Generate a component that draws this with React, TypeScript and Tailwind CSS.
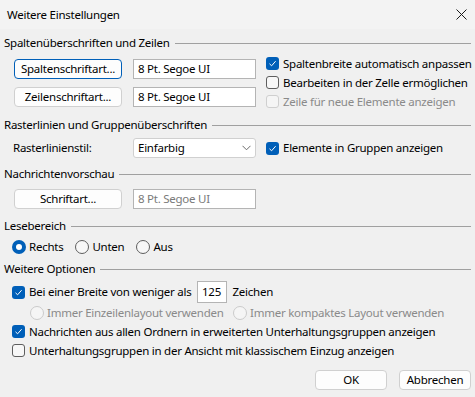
import React from 'react';

const Check = ({ checked = false, disabled = false }: { checked?: boolean; disabled?: boolean }) => {
  if (checked) {
    return (
      <span className="w-[13px] h-[13px] rounded-[3px] bg-[#005fb8] flex items-center justify-center shrink-0">
        <svg width="9" height="9" viewBox="0 0 9 9">
          <path d="M1.5 4.8 L3.6 6.8 L7.6 2.2" fill="none" stroke="#fff" strokeWidth="1" />
        </svg>
      </span>
    );
  }
  return (
    <span
      className={
        disabled
          ? 'w-[13px] h-[13px] rounded-[3px] border border-[#cfcfcf] bg-[#f5f5f5] shrink-0'
          : 'w-[13px] h-[13px] rounded-[3px] border border-[#5e5e5e] bg-[#f7f7f7] shrink-0'
      }
    />
  );
};

const Radio = ({ checked = false, disabled = false }: { checked?: boolean; disabled?: boolean }) => {
  if (checked) {
    return (
      <span className="w-[14px] h-[14px] rounded-full bg-[#005fb8] flex items-center justify-center shrink-0">
        <span className="w-[6px] h-[6px] rounded-full bg-white" />
      </span>
    );
  }
  return (
    <span
      className={
        disabled
          ? 'w-[14px] h-[14px] rounded-full border border-[#cbcbcb] bg-[#f5f5f5] shrink-0'
          : 'w-[14px] h-[14px] rounded-full border border-[#5e5e5e] bg-[#f7f7f7] shrink-0'
      }
    />
  );
};

const Header = ({ title, className = '' }: { title: string; className?: string }) => (
  <div className={'flex items-center h-[16px] pr-[4px] ' + className}>
    <span className="pr-[5px]">{title}</span>
    <span className="flex-1 h-px bg-[#a0a0a0]" />
  </div>
);

const Btn = ({ label, focused = false }: { label: string; focused?: boolean }) => (
  <button
    className={
      'w-[108px] h-[20px] rounded-[4px] bg-[#fdfdfd] text-center leading-none ' +
      (focused ? 'border border-[#005fb8]' : 'border border-[#d0d0d0]')
    }
  >
    {label}
  </button>
);

const Field = ({ value, muted = false }: { value: string; muted?: boolean }) => (
  <div
    className={
      'w-[123px] h-[20px] bg-white border border-[#b4b4b4] px-[4px] flex items-center ' +
      (muted ? 'text-[#7a7a7a]' : '')
    }
  >
    {value}
  </div>
);

const CheckRow = ({
  label,
  checked,
  disabled,
  className = '',
}: {
  label: string;
  checked?: boolean;
  disabled?: boolean;
  className?: string;
}) => (
  <div className={'flex items-center gap-[4px] h-[19px] ' + (disabled ? 'text-[#8a8a8a] ' : '') + className}>
    <Check checked={checked} disabled={disabled} />
    <span>{label}</span>
  </div>
);

export default function App() {
  return (
    <div className="w-[475px] h-[397px] bg-[#f0f0f0] text-[11.5px] tracking-[-0.25px] whitespace-nowrap text-black font-['Noto_Sans',sans-serif] flex flex-col overflow-hidden">
      {/* Titelleiste */}
      <div className="h-[29px] bg-[#f3f3f3] flex items-center justify-between pl-[7px] pr-[7px]">
        <span>Weitere Einstellungen</span>
        <svg width="11" height="11" viewBox="0 0 11 11" className="mr-[1px]">
          <path d="M0.5 0.5 L10.5 10.5 M10.5 0.5 L0.5 10.5" stroke="#1a1a1a" strokeWidth="1" />
        </svg>
      </div>

      <div className="pl-[4px] flex flex-col">
        <Header title="Spaltenüberschriften und Zeilen" className="mt-[6px]" />
        <div className="flex">
          <div className="flex flex-col pl-[10px] pt-[8px] gap-[8px]">
            <div className="flex items-center gap-[11px]">
              <Btn label="Spaltenschriftart..." focused />
              <Field value="8 Pt. Segoe UI" />
            </div>
            <div className="flex items-center gap-[11px]">
              <Btn label="Zeilenschriftart..." />
              <Field value="8 Pt. Segoe UI" />
            </div>
          </div>
          <div className="flex flex-col pl-[10px] pt-[3px]">
            <CheckRow label="Spaltenbreite automatisch anpassen" checked />
            <CheckRow label="Bearbeiten in der Zelle ermöglichen" />
            <CheckRow label="Zeile für neue Elemente anzeigen" disabled />
          </div>
        </div>

        <Header title="Rasterlinien und Gruppenüberschriften" className="mt-[6px]" />
        <div className="flex items-center pt-[5px]">
          <span className="w-[129px] pl-[9px]">Rasterlinienstil:</span>
          <div className="w-[123px] h-[20px] bg-white border border-[#d0d0d0] rounded-[3px] px-[4px] flex items-center justify-between">
            <span>Einfarbig</span>
            <svg width="9" height="6" viewBox="0 0 9 6">
              <path d="M0.5 0.8 L4.5 4.8 L8.5 0.8" fill="none" stroke="#6b6b6b" strokeWidth="1" />
            </svg>
          </div>
          <CheckRow label="Elemente in Gruppen anzeigen" checked className="pl-[10px]" />
        </div>

        <Header title="Nachrichtenvorschau" className="mt-[8px]" />
        <div className="flex items-center gap-[11px] pl-[10px] pt-[7px]">
          <Btn label="Schriftart..." />
          <Field value="8 Pt. Segoe UI" muted />
        </div>

        <Header title="Lesebereich" className="mt-[9px]" />
        <div className="flex items-center h-[18px] pl-[8px] mt-[4px]">
          <div className="flex items-center gap-[3px] mr-[12px]">
            <Radio checked />
            <span>Rechts</span>
          </div>
          <div className="flex items-center gap-[3px] mr-[12px]">
            <Radio />
            <span>Unten</span>
          </div>
          <div className="flex items-center gap-[3px]">
            <Radio />
            <span>Aus</span>
          </div>
        </div>

        <Header title="Weitere Optionen" className="mt-[5px]" />
        <div className="flex items-center pl-[8px] mt-[4px] h-[22px]">
          <CheckRow label="Bei einer Breite von weniger als" checked />
          <div className="w-[30px] h-[22px] bg-white border border-[#b4b4b4] ml-[5px] flex items-center justify-center">
            125
          </div>
          <span className="ml-[6px]">Zeichen</span>
        </div>
        <div className="flex items-center h-[19px] pl-[26px] text-[#8a8a8a]">
          <div className="flex items-center gap-[3px] w-[203px]">
            <Radio disabled />
            <span>Immer Einzeilenlayout verwenden</span>
          </div>
          <div className="flex items-center gap-[3px]">
            <Radio disabled />
            <span>Immer kompaktes Layout verwenden</span>
          </div>
        </div>
        <CheckRow
          label="Nachrichten aus allen Ordnern in erweiterten Unterhaltungsgruppen anzeigen"
          checked
          className="pl-[8px]"
        />
        <CheckRow label="Unterhaltungsgruppen in der Ansicht mit klassischem Einzug anzeigen" className="pl-[8px]" />

        <div className="flex justify-end gap-[12px] pr-[4px] mt-[10px]">
          <button className="w-[72px] h-[20px] rounded-[4px] bg-[#fdfdfd] border border-[#d0d0d0] leading-none">
            OK
          </button>
          <button className="w-[72px] h-[20px] rounded-[4px] bg-[#fdfdfd] border border-[#d0d0d0] leading-none">
            Abbrechen
          </button>
        </div>
      </div>
    </div>
  );
}
